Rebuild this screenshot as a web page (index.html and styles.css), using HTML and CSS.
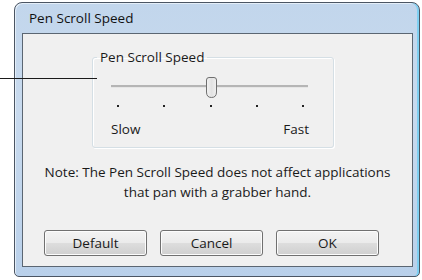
FILE: index.html
```html
<!DOCTYPE html>
<html>
<head>
<meta charset="utf-8">
<link rel="stylesheet" href="styles.css">
</head>
<body>
<div class="window">
  <div class="titlebar">Pen Scroll Speed</div>
  <div class="client">
    <fieldset class="group">
      <legend>Pen Scroll Speed</legend>
      <div class="slider">
        <div class="track"></div>
        <svg class="thumb" width="11" height="21" viewBox="0 0 11 21">
          <defs>
            <linearGradient id="tg" x1="0" y1="0" x2="1" y2="0">
              <stop offset="0" stop-color="#f4f4f4"/>
              <stop offset="0.5" stop-color="#e2e2e2"/>
              <stop offset="1" stop-color="#f0f0f0"/>
            </linearGradient>
          </defs>
          <path d="M0.5,3 A2.5,2.5 0 0 1 3,0.5 H8 A2.5,2.5 0 0 1 10.5,3 V15 Q10.5,20.5 5.5,20.5 Q0.5,20.5 0.5,15 Z" fill="url(#tg)" stroke="#6f6f6f"/>
        </svg>
      </div>
      <div class="ticks"><i></i><i></i><i></i><i></i><i></i></div>
      <div class="labels"><span>Slow</span><span>Fast</span></div>
    </fieldset>
    <p class="note">Note: The Pen Scroll Speed does not affect applications<br>that pan with a grabber hand.</p>
    <div class="buttons">
      <button class="btn">Default</button>
      <button class="btn">Cancel</button>
      <button class="btn">OK</button>
    </div>
  </div>
</div>
<div class="leader"></div>
</body>
</html>
```
FILE: styles.css
```css
html, body {
  margin: 0;
  padding: 0;
  background: #ffffff;
}
body {
  font-family: "Open Sans", "Noto Sans", sans-serif;
  font-size: 13.5px;
  color: #1a1a1a;
  width: 422px;
  height: 280px;
  overflow: hidden;
  position: relative;
}
.window {
  box-sizing: border-box;
  margin: 2px 0 0 14px;
  width: 406px;
  height: 275px;
  border: 1px solid #4b5563;
  border-radius: 8px 8px 5px 5px;
  background: linear-gradient(180deg, #c2d6ec 0%, #c8daee 40%, #b9d0ea 100%);
  box-shadow: inset -2px 0 0 #7fd0f2, inset 1px 1px 0 #e4eef8;
  padding: 0 6px 9px 7px;
  display: flex;
  flex-direction: column;
}
.titlebar {
  height: 30px;
  line-height: 30px;
  padding-left: 7px;
  color: #111;
}
.client {
  flex: 1;
  border: 1px solid #5b6672;
  background: #f0f0f0;
  display: flex;
  flex-direction: column;
}
.group {
  margin: 15px 0 0 69px;
  width: 242px;
  box-sizing: border-box;
  padding: 12px 0 9px 18px;
  border: 1px solid #d5dfe5;
  border-radius: 3px;
  box-shadow: inset 1px 1px 0 #ffffff, 1px 1px 0 #ffffff;
  min-width: 0;
}
.group legend {
  padding: 0 3px;
  margin-left: -14px;
  line-height: 16px;
}
.slider {
  position: relative;
  width: 197px;
  height: 21px;
}
.track {
  position: absolute;
  left: 0;
  right: 0;
  top: 8px;
  height: 2px;
  background: #b5b5b5;
  border-bottom: 1px solid #e6e6e6;
}
.thumb {
  position: absolute;
  left: 95px;
  top: 0;
  display: block;
}
.ticks {
  margin: 7px 0 0 6px;
  width: 187px;
  display: flex;
  justify-content: space-between;
}
.ticks i {
  display: block;
  width: 2px;
  height: 2px;
  background: #222;
}
.labels {
  margin-top: 13px;
  width: 198px;
  display: flex;
  justify-content: space-between;
  line-height: 18px;
}
.note {
  margin: 14px 0 0 0;
  text-align: center;
  line-height: 20px;
}
.buttons {
  margin: 28px 0 0 21px;
  display: flex;
  gap: 13px;
}
.btn {
  width: 103px;
  height: 26px;
  box-sizing: border-box;
  border: 1px solid #707070;
  border-radius: 3px;
  background: linear-gradient(180deg, #f3f3f3 0%, #ebebeb 48%, #dddddd 52%, #cfcfcf 100%);
  box-shadow: inset 0 0 0 1px #fcfcfc;
  font-family: "Open Sans", "Noto Sans", sans-serif;
  font-size: 13.5px;
  color: #1a1a1a;
  padding: 0;
}
.leader {
  position: absolute;
  left: 0;
  top: 78px;
  width: 97px;
  height: 1px;
  background: #1a1a1a;
}
```
